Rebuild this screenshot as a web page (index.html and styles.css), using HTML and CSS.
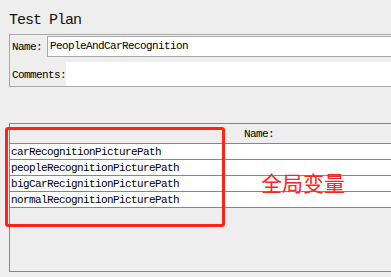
FILE: index.html
```html
<!DOCTYPE html>
<html lang="en">
<head>
    <meta charset="UTF-8">
    <title>Test Plan</title>
    <link rel="stylesheet" href="styles.css">
</head>
<body>
    <div class="title">Test Plan</div>

    <!-- Name / Comments -->
    <div class="panel">
        <div class="name-row">
            <span class="label">Name:</span>
            <div class="field">PeopleAndCarRecognition</div>
        </div>
        <div class="comments-row">
            <span class="label">Comments:</span>
            <div class="area"></div>
        </div>
    </div>

    <!-- User defined variables -->
    <div class="table">
        <div class="thead">Name:</div>
        <div class="trow">carRecognitionPicturePath</div>
        <div class="trow">peopleRecognitionPicturePath</div>
        <div class="trow">bigCarRecignitionPicturePath</div>
        <div class="trow">normalRecognitionPicturePath</div>
        <div class="filler"></div>
    </div>

    <div class="mark"></div>
    <div class="note">全局变量</div>
</body>
</html>
```

FILE: styles.css
```css
/* General */
body {
    margin: 0;
    background-color: #eeeeee;
    font-family: "Liberation Mono", monospace;
    font-size: 11px;
    letter-spacing: -0.6px;
    color: #000;
    overflow: hidden;
    position: relative;
    height: 277px;
}

/* Title */
.title {
    box-sizing: border-box;
    height: 34px;
    padding: 13px 0 0 9px;
    font-size: 15px;
    line-height: 16px;
    letter-spacing: -1px;
    color: #111;
}

/* Name panel */
.panel {
    margin-left: 9px;
    border: 1px solid #a8a8a8;
    border-right: none;
    padding-left: 1px;
}

.name-row {
    display: flex;
    align-items: center;
    height: 22px;
    padding-top: 1px;
    box-sizing: border-box;
}

.label {
    padding-left: 1px;
    white-space: nowrap;
}

.name-row .label {
    width: 35px;
}

.field {
    flex: 1;
    box-sizing: border-box;
    height: 21px;
    line-height: 19px;
    border: 1px solid #a8a8a8;
    border-right: none;
    background-color: #fff;
    padding-left: 2px;
}

.comments-row {
    display: flex;
    align-items: flex-end;
    height: 29px;
}

.comments-row .label {
    width: 54px;
    line-height: 14px;
    padding-bottom: 4px;
}

.area {
    flex: 1;
    height: 24px;
    background-color: #fff;
}

/* Table */
.table {
    margin: 36px 0 0 9px;
    border: 1px solid #868686;
    border-right: none;
}

.thead {
    box-sizing: border-box;
    height: 20px;
    padding: 3px 0 0 234px;
    line-height: 14px;
    border-bottom: 1px solid #868686;
}

.trow {
    box-sizing: border-box;
    height: 16px;
    padding: 1px 0 0 1px;
    line-height: 14px;
    background-color: #fff;
    border-bottom: 1px solid #868686;
}

.filler {
    height: 63px;
}

/* Annotation */
.mark {
    position: absolute;
    left: 5px;
    top: 127px;
    width: 220px;
    height: 100px;
    box-sizing: border-box;
    border: 3px solid #ff2318;
    border-radius: 3px;
}

.note {
    position: absolute;
    left: 261px;
    top: 172px;
    font-family: "Noto Sans CJK SC", sans-serif;
    font-size: 21px;
    line-height: 21px;
    letter-spacing: 0;
    color: #ff2318;
}
```
